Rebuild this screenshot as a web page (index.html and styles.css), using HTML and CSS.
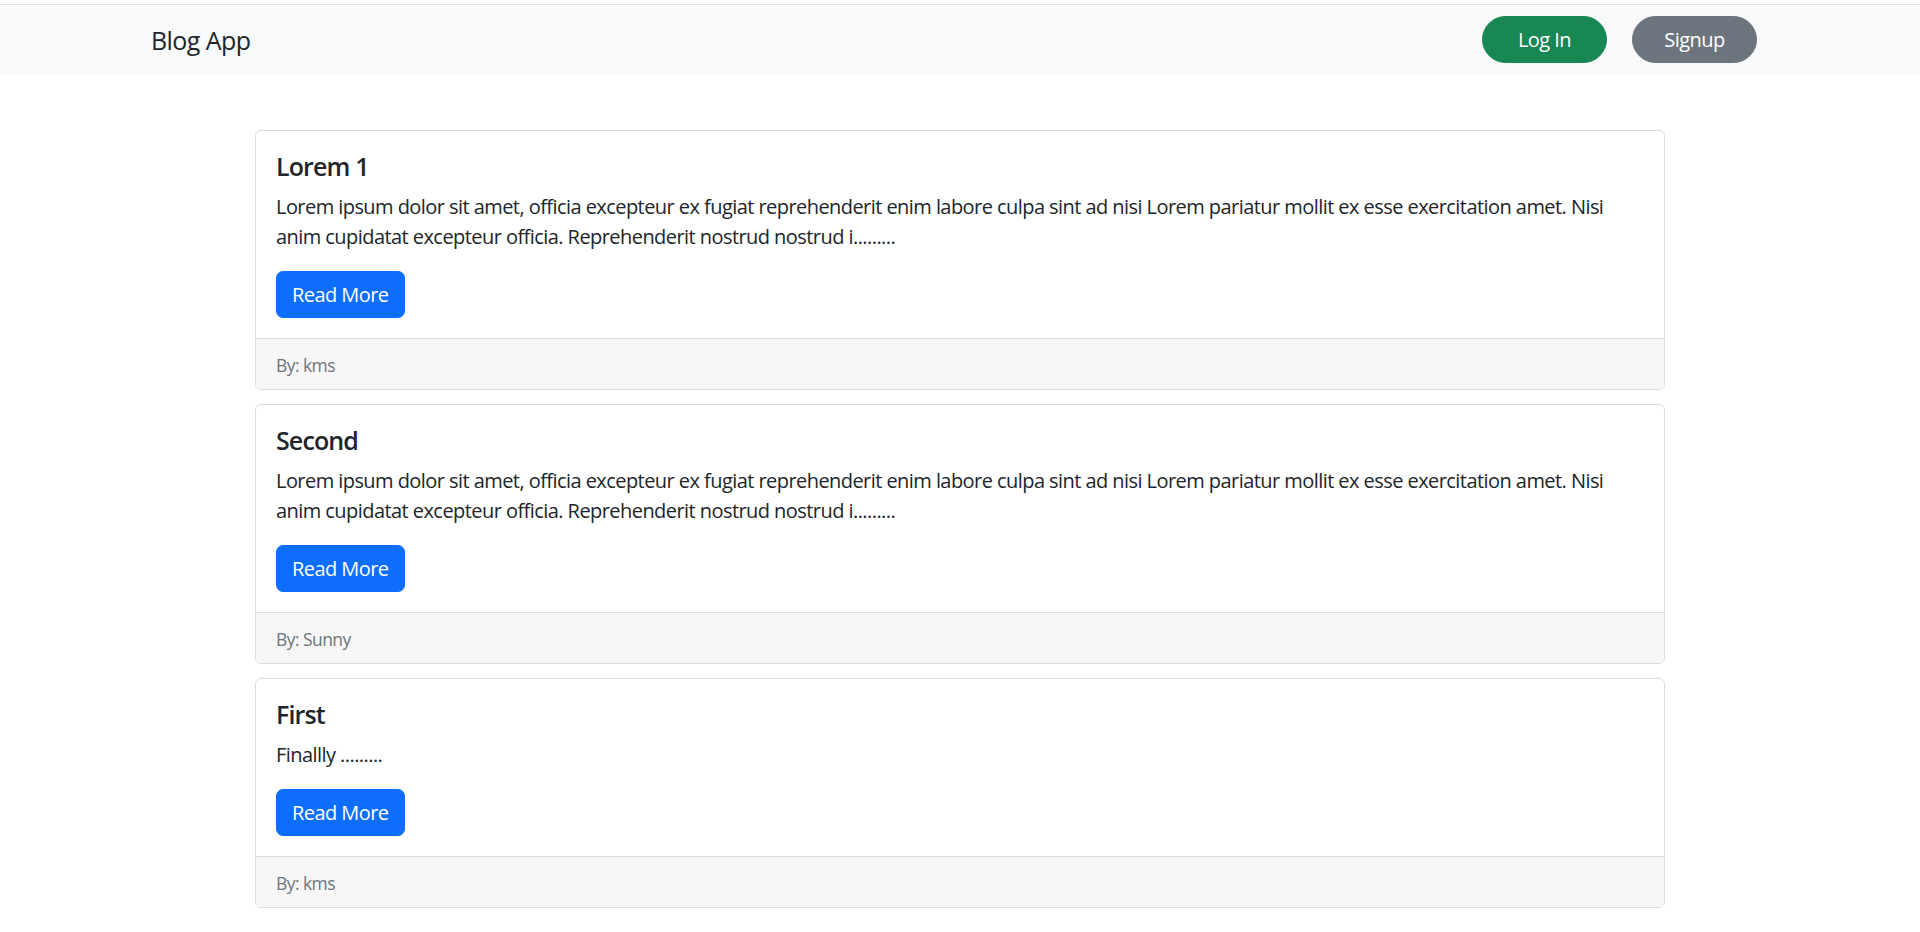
FILE: index.html
```html
<!DOCTYPE html>
<html lang="en">
<head>
<meta charset="utf-8">
<title>Blog App</title>
<link rel="stylesheet" href="styles.css">
</head>
<body>
<div class="topline"></div>
<nav class="navbar">
  <a class="brand" href="#">Blog App</a>
  <div class="nav-actions">
    <a class="btn btn-pill btn-green" href="#">Log In</a>
    <a class="btn btn-pill btn-gray" href="#">Signup</a>
  </div>
</nav>
<main class="posts">
  <article class="card">
    <div class="card-body">
      <h5 class="card-title">Lorem 1</h5>
      <p class="card-text">Lorem ipsum dolor sit amet, officia excepteur ex fugiat reprehenderit enim labore culpa sint ad nisi Lorem pariatur mollit ex esse exercitation amet. Nisi anim cupidatat excepteur officia. Reprehenderit nostrud nostrud i.........</p>
      <a class="btn btn-blue" href="#">Read More</a>
    </div>
    <div class="card-footer"><small class="muted">By: kms</small></div>
  </article>
  <article class="card">
    <div class="card-body">
      <h5 class="card-title">Second</h5>
      <p class="card-text">Lorem ipsum dolor sit amet, officia excepteur ex fugiat reprehenderit enim labore culpa sint ad nisi Lorem pariatur mollit ex esse exercitation amet. Nisi anim cupidatat excepteur officia. Reprehenderit nostrud nostrud i.........</p>
      <a class="btn btn-blue" href="#">Read More</a>
    </div>
    <div class="card-footer"><small class="muted">By: Sunny</small></div>
  </article>
  <article class="card">
    <div class="card-body">
      <h5 class="card-title">First</h5>
      <p class="card-text">Finallly .........</p>
      <a class="btn btn-blue" href="#">Read More</a>
    </div>
    <div class="card-footer"><small class="muted">By: kms</small></div>
  </article>
</main>
</body>
</html>
```

FILE: styles.css
```css
* { box-sizing: border-box; }
html, body { margin: 0; padding: 0; }
body {
  background: #fff;
  color: #212529;
  font-family: "Open Sans", "Noto Sans", "Liberation Sans", sans-serif;
  font-size: 20px;
  line-height: 30px;
  letter-spacing: -0.028em;
}
.topline {
  height: 5px;
  border-bottom: 1px solid #dcdcdc;
}
.navbar {
  height: 70px;
  background: #f8f9fa;
  display: flex;
  align-items: center;
  justify-content: space-between;
  padding: 0 163px 0 151px;
}
.brand {
  font-size: 25px;
  line-height: 37px;
  color: #212529;
  text-decoration: none;
}
.nav-actions {
  display: flex;
  gap: 25px;
  margin-top: -1px;
}
.btn {
  display: inline-block;
  text-decoration: none;
  color: #fff;
  font-size: 20px;
  line-height: 30px;
  padding: 7.5px 15px;
  border: 1px solid transparent;
  border-radius: 7px;
  text-align: center;
}
.btn-pill { width: 125px; border-radius: 24px; }
.btn-green { background: #198754; border-color: #198754; }
.btn-gray { background: #6c757d; border-color: #6c757d; }
.btn-blue { background: #0d6efd; border-color: #0d6efd; }
.posts {
  width: 1410px;
  margin: 55px auto 0;
  display: flex;
  flex-direction: column;
  gap: 14px;
}
.card {
  border: 1px solid #dcdcdc;
  border-radius: 6px;
  overflow: hidden;
  background: #fff;
}
.card-body { padding: 20px; }
.card-title {
  margin: 0 0 10px;
  font-size: 25px;
  line-height: 30px;
  font-weight: 600;
  letter-spacing: -0.035em;
}
.card-text { margin: 0 0 20px; padding-top: 1px; margin-bottom: 19px; }
.card-footer {
  background: #f7f7f7;
  border-top: 1px solid #dcdcdc;
  padding: 11px 20px 9px;
}
.muted { color: #6c757d; font-size: 17.5px; }
```
